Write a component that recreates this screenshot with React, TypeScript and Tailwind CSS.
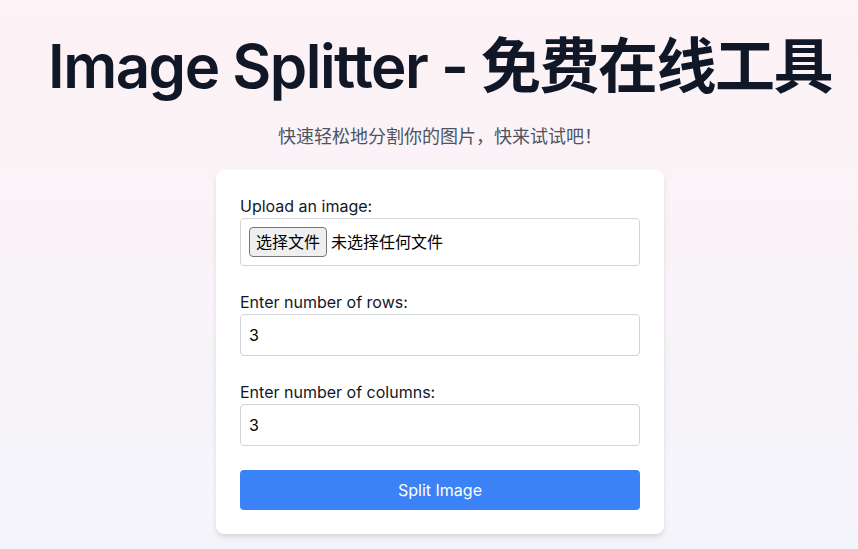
import { useState } from 'react';

const font = { fontFamily: 'Inter, "Noto Sans CJK SC", sans-serif' };

export default function App() {
  const [rows, setRows] = useState('3');
  const [cols, setCols] = useState('3');

  return (
    <div
      className="min-h-[549px] w-[858px] overflow-hidden bg-gradient-to-b from-[#fdf2f5] to-[#f4f5fb]"
      style={font}
    >
      <div className="flex w-[880px] flex-col items-center pt-9">
        <h1 className="whitespace-nowrap text-6xl leading-none font-semibold tracking-tight text-gray-900">
          Image Splitter - <span className="font-bold">免费在线工具</span>
        </h1>
        <p className="mt-[27px] mb-[19px] text-lg text-[#4b5563]">快速轻松地分割你的图片，快来试试吧！</p>

        <div className="w-[448px] rounded-lg bg-white p-6 shadow-md">
          <div className="mb-6">
            <label className="block text-base text-[#111827]">Upload an image:</label>
            <div className="flex items-center rounded border border-[#d1d5db] p-2 text-base text-black">
              <span className="rounded-sm border border-[#767676] bg-[#efefef] px-[6px] py-[1px] leading-[26px]">
                选择文件
              </span>
              <span className="ml-1">未选择任何文件</span>
            </div>
          </div>

          <div className="mb-6">
            <label className="block text-base text-[#111827]">Enter number of rows:</label>
            <input
              type="number"
              value={rows}
              onChange={(e) => setRows(e.target.value)}
              className="w-full rounded border border-[#d1d5db] p-2 text-base leading-6 text-black outline-none"
            />
          </div>

          <div className="mb-6">
            <label className="block text-base text-[#111827]">Enter number of columns:</label>
            <input
              type="number"
              value={cols}
              onChange={(e) => setCols(e.target.value)}
              className="w-full rounded border border-[#d1d5db] p-2 text-base leading-6 text-black outline-none"
            />
          </div>

          <button className="h-10 w-full rounded bg-[#3b82f6] text-base text-white">Split Image</button>
        </div>
      </div>
    </div>
  );
}
